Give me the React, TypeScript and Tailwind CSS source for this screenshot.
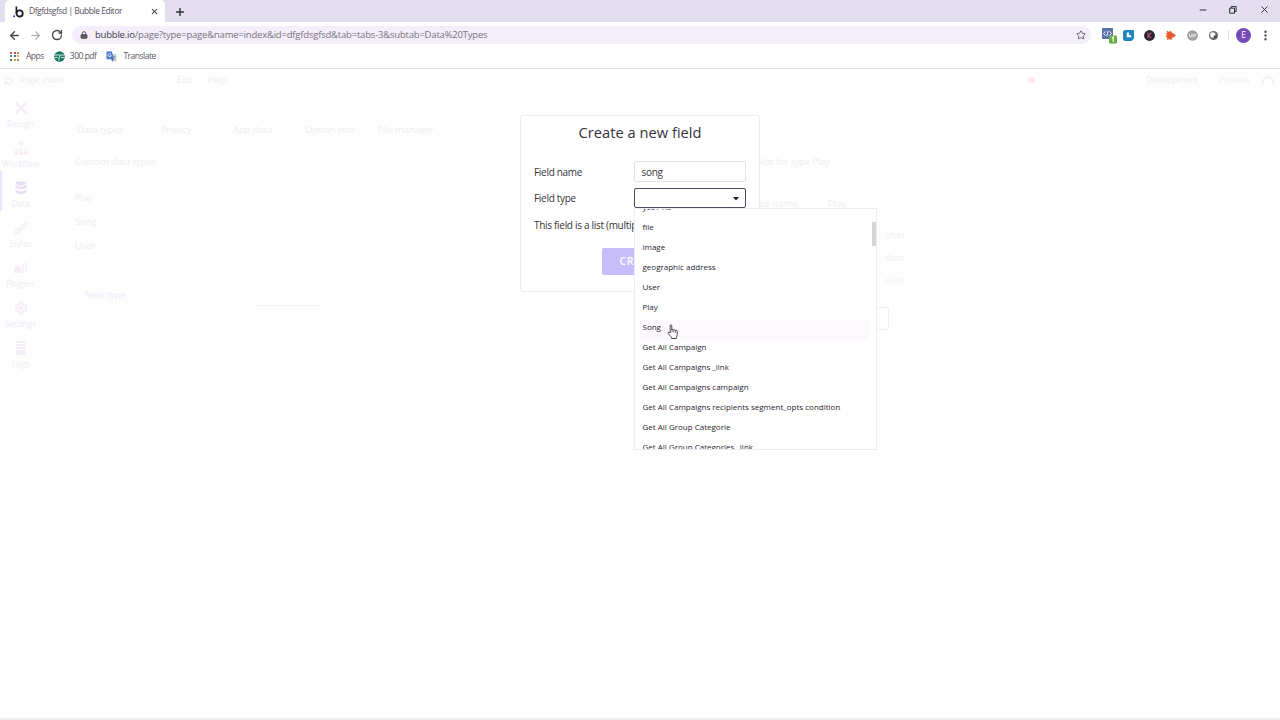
import React from 'react';
import {
  ArrowLeft,
  ArrowRight,
  RotateCw,
  Lock,
  Star,
  Plus,
  X,
  Minus,
  MoreVertical,
  Brush,
  Settings
} from 'lucide-react';

const fieldTypes = [
  'yes / no',
  'file',
  'image',
  'geographic address',
  'User',
  'Play',
  'Song',
  'Get All Campaign',
  'Get All Campaigns _link',
  'Get All Campaigns campaign',
  'Get All Campaigns recipients segment_opts condition',
  'Get All Group Categorie',
  'Get All Group Categories _link'
];

const iconClass = 'w-[14px] h-[14px] shrink-0';

function DesignIcon() {
  return (
    <svg viewBox="0 0 14 14" className={iconClass} fill="none" stroke="currentColor" strokeWidth="2.5">
      <path d="M2 2l10 10M12 2L2 12" />
      <path d="M1 3l2-2M11 13l2-2" strokeWidth="1.500" />
    </svg>
  );
}

function WorkflowIcon() {
  return (
    <svg viewBox="0 0 14 14" className={iconClass} fill="#fbeff6">
      <path d="M4.500 0h5v4h-5zM6.500 4h1v4h-1zM1 8h12v1H1zM0 10h4v4H0zM5 10h4v4H5zM10 10h4v4h-4z" />
    </svg>
  );
}

function DataIcon() {
  return (
    <svg viewBox="0 0 14 14" className={iconClass} fill="currentColor">
      <ellipse cx="7" cy="2.300" rx="5.500" ry="2.100" />
      <path d="M1.500 4q5.500 3 11 0v2.500q-5.500 3.300-11 0zM1.500 8.700q5.500 3 11 0v2.600q-5.500 4-11 0z" />
    </svg>
  );
}

function PluginsIcon() {
  return (
    <svg viewBox="0 0 14 14" className={iconClass} fill="currentColor">
      <path d="M0 6h2.500V4h2v2H7v6H0zM8.500 3h1.500v9H8.500zM11.500 1H13v9h-1.500z" />
    </svg>
  );
}

function LogsIcon() {
  return (
    <svg viewBox="0 0 14 14" className={iconClass} fill="currentColor">
      <path d="M2 0h10v2H2zM2 3h10v2H2zM2 6h10v2H2zM2 9h10v5H2z" />
    </svg>
  );
}

const sections = [
  { label: 'Design', icon: <DesignIcon /> },
  { label: 'Workflow', icon: <WorkflowIcon /> },
  { label: 'Data', icon: <DataIcon />, active: true },
  { label: 'Styles', icon: <Brush size={14} strokeWidth={2.4} className="shrink-0" /> },
  { label: 'Plugins', icon: <PluginsIcon /> },
  { label: 'Settings', icon: <Settings size={14} strokeWidth={3} className="shrink-0" /> },
  { label: 'Logs', icon: <LogsIcon /> }
];

const subtabs = [
  { label: 'Data types', width: 'w-[84px]' },
  { label: 'Privacy', width: 'w-[72px]' },
  { label: 'App data', width: 'w-[72px]' },
  { label: 'Option sets', width: 'w-[73px]' },
  { label: 'File manager', width: 'w-[72px]' }
];

const appDots = [
  'bg-[#d9574c]', 'bg-[#b5564c]', 'bg-[#e07b60]',
  'bg-[#4f9a63]', 'bg-[#4a6fa8]', 'bg-[#e0b04c]',
  'bg-[#3f8457]', 'bg-[#c99a3c]', 'bg-[#a8893c]'
];

function BubbleLogo({ className }: { className?: string }) {
  return (
    <svg viewBox="0 0 11 12" className={className} fill="none">
      <path d="M3.4 0.5V7.3" stroke="#1c1b22" strokeWidth="1.7" />
      <circle cx="6.6" cy="7.4" r="3.1" stroke="#1c1b22" strokeWidth="1.8" />
      <circle cx="1.1" cy="10.3" r="1" fill="#2b35c9" />
    </svg>
  );
}

function TabStrip() {
  return (
    <div className="h-[22px] bg-[#e3dfee] flex items-end shrink-0">
      <div className="ml-[5px] w-[160px] h-[22px] bg-white rounded-t-[5px] flex items-center pl-2 pr-[6px] pt-px">
        <BubbleLogo className="w-[11px] h-3 shrink-0" />
        <span className="ml-[5px] text-[8.5px] tracking-[-0.48px] text-[#55525c] whitespace-nowrap">
          Dfgfdsgfsd | Bubble Editor
        </span>
        <X size={9} strokeWidth={2.8} className="ml-auto text-[#2f2d35]" />
      </div>
      <div className="h-[22px] flex items-center ml-[9px] pt-px">
        <Plus size={12} strokeWidth={2.8} className="text-[#2f2d35]" />
      </div>
      <div className="ml-auto mr-[10px] h-[19px] self-start flex items-center text-[#2f2d35]">
        <Minus size={10} strokeWidth={2.4} />
        <svg viewBox="0 0 8 8" className="w-2 h-2 ml-[21px] mr-[22px]" fill="none" stroke="currentColor">
          <path d="M0.7 2.2h4.8v5H0.7zM2.2 2V0.6h5v5H5.8" />
        </svg>
        <X size={11} strokeWidth={2} />
      </div>
    </div>
  );
}

function Extensions() {
  return (
    <div className="flex items-center ml-[10px]">
      <svg viewBox="0 0 16 16" className="w-4 h-4 mt-[2px]">
        <rect x="1" y="0" width="11" height="11" fill="#5c70ad" />
        <path d="M4.500 3.200L2.600 5.500l1.900 2.300M8.500 3.200l1.900 2.300-1.900 2.300M7.200 2.800L5.800 8.200" stroke="#fff" strokeWidth="0.900" fill="none" />
        <rect x="8" y="7.500" width="8" height="8" rx="1.200" fill="#6cab43" />
        <path d="M10.800 10l1.400-1v5" stroke="#fff" strokeWidth="1.100" fill="none" />
      </svg>
      <svg viewBox="0 0 11 11" className="w-[11px] h-[11px] ml-[6px]">
        <path d="M2.500 0H11v8.500L8.500 11H2.500A2.500 2.500 0 0 1 0 8.500v-6A2.500 2.500 0 0 1 2.500 0z" fill="#1f86c2" />
        <path d="M3.800 2.500v4.700h4.500a2 2 0 0 0-2.300-2.300V2.500z" fill="#fff" />
      </svg>
      <svg viewBox="0 0 11 11" className="w-[11px] h-[11px] ml-[10px]">
        <circle cx="5.500" cy="5.500" r="5.400" fill="#29252f" />
        <path d="M4 2.800v5.400M7.300 2.800L4.300 5.500l3 2.700" stroke="#b04f78" strokeWidth="1.200" fill="none" />
      </svg>
      <svg viewBox="0 0 11 11" className="w-[11px] h-[11px] ml-[10px]">
        <path d="M2 1l2 1.200L5.500 1l1.300 2 1.700.7L10.500 5.500 8.500 7 7 7.500 6 10 4.500 8.800 2.200 9.600 2.500 7.500.8 6.200 2.400 5 1 3.500h1.600z" fill="#e85a30" stroke="#e85a30" strokeWidth="0.600" />
      </svg>
      <svg viewBox="0 0 11 11" className="w-[11px] h-[11px] ml-[11px]">
        <circle cx="5.500" cy="5.500" r="5.300" fill="#a09fa3" />
        <path d="M2.500 3.800v2q0 1 1.200 1t1.200-1v-2M6.200 7.500V5.300a1.200 1.200 0 1 1 1.200 1.200" stroke="#fff" strokeWidth="0.900" fill="none" />
      </svg>
      <svg viewBox="0 0 11 11" className="w-[11px] h-[11px] ml-[10px]">
        <circle cx="5.500" cy="5.500" r="4.500" fill="#6c6b70" />
        <circle cx="4.800" cy="4.900" r="2.600" fill="#fff" />
        <path d="M5.500 5.500h3.500v2.500H6z" fill="#4c4b50" />
      </svg>
      <div className="w-px h-[10px] bg-[#dddae2] ml-[9px]" />
      <div className="ml-[7px] w-[15px] h-[15px] rounded-full bg-[#7449ba] text-white text-[8.5px] flex items-center justify-center">
        E
      </div>
      <MoreVertical size={13} strokeWidth={2.4} className="ml-[8px] text-[#4b4952]" />
    </div>
  );
}

function Toolbar() {
  return (
    <div className="h-[25px] flex items-center shrink-0 pl-[8px] pr-[8px] pt-px">
      <ArrowLeft size={13} strokeWidth={2.4} className="text-[#45434b]" />
      <ArrowRight size={13} strokeWidth={2} className="ml-[8px] text-[#a9a7ae]" />
      <RotateCw size={12} strokeWidth={2.6} className="ml-[9px] text-[#45434b]" />
      <div className="ml-[9px] w-[1021px] h-[18px] rounded-full bg-[#f4eefb] flex items-center pl-[8px] pr-[5px]">
        <Lock size={8} strokeWidth={3} className="text-[#5d5a63] [&>rect]:fill-current" />
        <span className="ml-[7px] text-[9.5px] tracking-[-0.2px] text-[#77737f] whitespace-nowrap">
          <span className="text-[#3c3943]">bubble.io</span>
          /page?type=page&amp;name=index&amp;id=dfgfdsgfsd&amp;tab=tabs-3&amp;subtab=Data%20Types
        </span>
        <Star size={10} strokeWidth={2.2} className="ml-auto text-[#5d5a63]" />
      </div>
      <Extensions />
    </div>
  );
}

function Bookmarks() {
  return (
    <div className="h-[22px] border-b border-[#e6e4ea] flex items-center shrink-0 pl-[10px] pb-[3px] text-[8.5px] tracking-[-0.5px] text-[#5b5862]">
      <div className="grid grid-cols-3 gap-[1.5px]">
        {appDots.map((dot, index) => (
          <div key={index} className={`w-[2px] h-[2px] ${dot}`} />
        ))}
      </div>
      <span className="ml-[7px]">Apps</span>
      <svg viewBox="0 0 11 11" className="w-[11px] h-[11px] ml-[10px]">
        <circle cx="5.500" cy="5.500" r="5.300" fill="#1d7a62" />
        <path d="M0.500 4h4.200q1 0 1.500-.8M10.500 4H7.500Q5.500 4.300 5.200 6.500L4.800 9.500M1 6.500h2.500M7 6.500h3.500" stroke="#e4f4ee" strokeWidth="0.900" fill="none" />
      </svg>
      <span className="ml-[5px]">300.pdf</span>
      <svg viewBox="0 0 11 11" className="w-[11px] h-[11px] ml-[10px]">
        <path d="M4 3h6.500v7.500H6z" fill="#d3d4da" />
        <path d="M0.500 0.500h5.300L8 8.300H0.500z" fill="#4a79cf" />
        <path d="M5 3.300a1.600 1.600 0 1 0 .2 1.400H3.800" stroke="#fff" strokeWidth="0.800" fill="none" />
        <path d="M6 10.500l2-2.200H5.500z" fill="#3557a5" />
        <path d="M7.300 5.500h2.500M8.500 4.800v.7q0 1.500-1 2.300M8 6.500l1.800 1.800" stroke="#83868f" strokeWidth="0.600" fill="none" />
      </svg>
      <span className="ml-[6px]">Translate</span>
    </div>
  );
}

function EditorHeader() {
  return (
    <div className="h-[22px] flex items-center shrink-0 text-[8.5px] text-[#efecf1]">
      <div className="w-[177px] pl-[4px] flex items-center gap-[7px]">
        <svg viewBox="0 0 11 11" className="w-[9px] h-[9px]" fill="none" stroke="currentColor" strokeWidth="1.500">
          <path d="M2 0v3M0 9h3" />
          <circle cx="6" cy="6" r="3.500" />
        </svg>
        <span className="tracking-[-0.2px]">Page: index</span>
      </div>
      <span className="w-[31px]">Edit</span>
      <span>Help</span>
      <div className="ml-auto flex items-center pr-[6px]">
        <div className="w-[7px] h-[6px] rounded-t-full bg-[#fde9ee] mr-[111px]" />
        <span className="w-[73px] text-[#eeebf0] tracking-[-0.15px]">Development</span>
        <span className="w-[43px] text-[#f3f0f5]">Preview</span>
        <div className="w-[12px] h-[9px] rounded-t-full border-2 border-b-0 border-[#f8f0f7]" />
      </div>
    </div>
  );
}

function Sidebar() {
  return (
    <div className="w-[41px] shrink-0 text-[8.5px] text-[#f3eef7]">
      {sections.map((section) => (
        <div
          key={section.label}
          className={`h-10 flex flex-col items-center border-l-2 pt-[10px] pr-[2px] ${
            section.active ? 'border-[#ebe5fc] text-[#e6dff4]' : 'border-transparent'
          }`}
        >
          {section.icon}
          <span className="mt-[3px] leading-[12px] text-[#f0ecf4]">{section.label}</span>
        </div>
      ))}
    </div>
  );
}

function DataTab() {
  return (
    <div className="flex-1 text-[#f0edf2] text-[9.5px] leading-[14px]">
      <div className="flex pl-[36px] pt-[32px] tracking-[-0.1px]">
        {subtabs.map((tab) => (
          <span key={tab.label} className={`${tab.width} whitespace-nowrap`}>
            {tab.label}
          </span>
        ))}
      </div>
      <div className="flex pl-[34px] pt-[18px]">
        <div className="w-[180px] shrink-0 tracking-[-0.1px]">
          <div>Custom data types</div>
          <div className="mt-[22px] flex flex-col gap-[10px]">
            <span>Play</span>
            <span>Song</span>
            <span>User</span>
          </div>
          <div className="mt-[35px] pl-[10px] text-[#f2eafa]">New type</div>
        </div>
        <div className="w-[65px] h-px mt-[150px] bg-[#f5f3f6]" />
        <div className="ml-[429px] w-[141px]">
          <div className="whitespace-nowrap tracking-[-0.1px]">Fields for type Play</div>
          <div className="mt-[28px] flex justify-between">
            <span>Type name</span>
            <span className="mr-[44px]">Play</span>
          </div>
          <div className="mt-[17px] flex flex-col gap-[8.5px] items-end w-[156px]">
            <span className="w-[20px]">User</span>
            <span className="w-[20px]">date</span>
            <span className="w-[20px] text-[#f6eef4]">date</span>
          </div>
          <div className="mt-[20px] h-[23px] w-[140px] border border-[#f0eef2] rounded-[2px]" />
        </div>
      </div>
    </div>
  );
}

function TypeDropdown() {
  return (
    <div className="absolute left-[113px] top-[92px] w-[243px] h-[242px] border border-[#eeecf1] bg-white overflow-hidden text-[8px] leading-[14px] tracking-normal text-[#29262f]">
      <div className="-mt-[9px]">
        {fieldTypes.map((type) => (
          <div
            key={type}
            className={`h-5 ml-[5px] pl-[2.5px] mr-[7px] whitespace-nowrap ${
              type === 'Song' ? 'bg-[#fdf7fe]' : ''
            }`}
          >
            {type}
          </div>
        ))}
      </div>
      <div className="absolute right-0 top-[13px] w-[4px] h-[24px] bg-[#d6d5d8]" />
    </div>
  );
}

function NewFieldDialog() {
  return (
    <div className="absolute left-[520px] top-[115px] w-[240px] h-[177px] bg-white border border-[#eeecf1] rounded-[3px] px-[13px] text-[10px] tracking-[-0.3px] text-[#36333c]">
      <h2 className="text-center text-[14.7px] tracking-normal leading-[20px] mt-[6px]">Create a new field</h2>
      <div className="mt-[19px] h-[21px] flex items-center justify-between">
        <span className="pt-px">Field name</span>
        <div className="self-start w-[112px] h-[21px] border border-[#e3e1e7] rounded-[2px] flex items-center pl-[6.5px] pt-px">
          song
        </div>
      </div>
      <div className="mt-[6px] h-[21px] flex items-center justify-between">
        <span>Field type</span>
        <div className="self-start w-[112px] h-5 border border-[#4e4968] rounded-[2px] flex items-center justify-end pr-[6px] pt-px">
          <svg viewBox="0 0 6 4" className="w-[6px] h-[4px]">
            <path d="M0 0h6L3 3.500z" fill="#1b1a1f" />
          </svg>
        </div>
      </div>
      <div className="mt-[6px] h-[21px] flex items-center whitespace-nowrap">
        This field is a list (multiple entries)
      </div>
      <div className="mt-[12px] ml-[68px] w-[76px] h-[27px] rounded-[2px] bg-[#c7bdfb] text-white text-[10.5px] font-semibold tracking-[0.5px] flex items-center justify-center">
        CREATE
      </div>
      <TypeDropdown />
    </div>
  );
}

function HandCursor() {
  return (
    <svg viewBox="0 0 12 16" className="absolute left-[667px] top-[324px] w-3 h-4">
      <path
        d="M3.200 9V1.800q0-1 .8-1t.8 1V6q.2-.8 1-.7.8.1.8 1 .2-.7 1-.6.8.1.8 1 .3-.5 1-.3.800.200.800 1v3.200q0 1.500-.8 2.600v1.300H4.600v-1.200L1.400 9.800Q.6 8.700 1.400 8.200q.7-.3 1.800.8z"
        fill="#fff"
        stroke="#3a3840"
        strokeWidth="0.900"
      />
      <path d="M5 6v2.500M6.700 6.500v2M8.400 7v1.800" stroke="#3a3840" strokeWidth="0.700" />
    </svg>
  );
}

export default function App() {
  return (
    <div className="relative w-[1280px] h-[720px] overflow-hidden bg-white flex flex-col font-['Open_Sans','Noto_Sans',sans-serif]">
      <TabStrip />
      <Toolbar />
      <Bookmarks />
      <div className="flex-1 flex flex-col bg-[#fefefe] border-b-2 border-[#ececed]">
        <EditorHeader />
        <div className="flex flex-1">
          <Sidebar />
          <DataTab />
        </div>
      </div>
      <NewFieldDialog />
      <HandCursor />
    </div>
  );
}
